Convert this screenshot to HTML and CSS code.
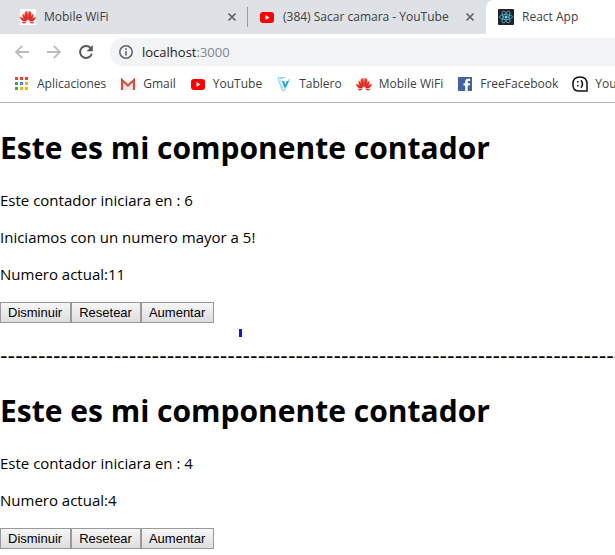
FILE: index.html
```html
<!DOCTYPE html>
<html lang="es">
<head>
<meta charset="utf-8">
<title>React App</title>
<link rel="stylesheet" href="styles.css">
</head>
<body>
<svg class="defs" aria-hidden="true">
  <defs>
    <linearGradient id="red" x1="0" y1="0" x2="0" y2="1">
      <stop offset="0" stop-color="#f0503c"/><stop offset="1" stop-color="#d60808"/>
    </linearGradient>
    <symbol id="flower" viewBox="0 0 16 16">
      <g fill="url(#red)">
        <path d="M7.7 11.4C5 8.500 3.700 5.500 5 3.300 5.700 2.300 6.600 2 7.400 2c.6 2.800.6 6 .3 9.400z"/>
        <path d="M8.300 11.400C11 8.500 12.300 5.500 11 3.300 10.300 2.300 9.400 2 8.600 2c-.6 2.800-.6 6-.3 9.400z"/>
        <path d="M7.200 11.800C3.800 10 1.600 7.500 2.700 4.400 4.800 6 6.500 8.800 7.200 11.800z"/>
        <path d="M8.800 11.800c3.400-1.800 5.600-4.300 4.500-7.400-2.100 1.600-3.800 4.400-4.500 7.400z"/>
        <path d="M6.800 12.300C3.300 12.600.2 11.200.1 7.700c2.900.8 5.300 2.500 6.700 4.600z"/>
        <path d="M9.200 12.300c3.500.3 6.600-1.100 6.700-4.600-2.900.8-5.300 2.500-6.700 4.600z"/>
        <path d="M6.700 12.800H1.600c1.200 2.200 3.600 2.200 5.100 0z"/>
        <path d="M9.300 12.800h5.100c-1.200 2.200-3.600 2.200-5.100 0z"/>
      </g>
    </symbol>
    <symbol id="youtube" viewBox="0 0 16 16">
      <rect x="1" y="3" width="14" height="11" rx="3" fill="#f00"/>
      <path d="M6.500 6v5l4-2.500z" fill="#fff"/>
    </symbol>
    <symbol id="close" viewBox="0 0 16 16">
      <path d="M4.500 4.500l7 7m0-7l-7 7" stroke="#5f6368" stroke-width="1.700" fill="none"/>
    </symbol>
  </defs>
</svg>

<header class="browser">
  <div class="tabs">
    <div class="tab tab-first">
      <svg class="icon boxed"><use href="#flower"/></svg>
      <span class="tab-title">Mobile WiFi</span>
      <button class="tab-close" aria-label="Cerrar"><svg class="icon"><use href="#close"/></svg></button>
    </div>
    <div class="tab tab-second">
      <svg class="icon"><use href="#youtube"/></svg>
      <span class="tab-title">(384) Sacar camara - YouTube</span>
      <button class="tab-close" aria-label="Cerrar"><svg class="icon"><use href="#close"/></svg></button>
    </div>
    <div class="tab tab-active">
      <svg class="icon" viewBox="0 0 16 16">
        <rect width="16" height="16" rx="1" fill="#20232a"/>
        <g fill="none" stroke="#53b5cb" stroke-width=".8">
          <ellipse cx="8" cy="8" rx="6.500" ry="2.600"/>
          <ellipse cx="8" cy="8" rx="6.500" ry="2.600" transform="rotate(60 8 8)"/>
          <ellipse cx="8" cy="8" rx="6.500" ry="2.600" transform="rotate(120 8 8)"/>
        </g>
        <circle cx="8" cy="8" r="1.500" fill="#61dafb"/>
      </svg>
      <span class="tab-title">React App</span>
    </div>
  </div>

  <div class="toolbar">
    <button class="nav" aria-label="Atrás"><svg class="icon" viewBox="0 0 16 16"><path d="M15 8H2m6.200-6.200L2 8l6.200 6.200" fill="none" stroke="#babcbe" stroke-width="1.800"/></svg></button>
    <button class="nav" aria-label="Adelante"><svg class="icon" viewBox="0 0 16 16"><path d="M1 8h13M7.800 1.800L14 8l-6.200 6.200" fill="none" stroke="#babcbe" stroke-width="1.800"/></svg></button>
    <button class="nav" aria-label="Recargar"><svg class="icon" viewBox="0 0 16 16"><path d="M13 4.500A6 6 0 1 0 13.800 9.800" fill="none" stroke="#54585c" stroke-width="2"/><path d="M14.800 1v6.200H8.600z" fill="#54585c"/></svg></button>
    <div class="address">
      <svg class="icon" viewBox="0 0 16 16"><circle cx="8" cy="8" r="6.200" fill="none" stroke="#5f6368" stroke-width="1.500"/><path d="M8 7v4.500M8 4.300v1.600" stroke="#5f6368" stroke-width="1.600"/></svg>
      <span class="url">localhost<span class="port">:3000</span></span>
    </div>
  </div>

  <nav class="bookmarks">
    <a href="#">
      <svg class="icon" viewBox="0 0 16 16">
        <path d="M1 1h3v3H1zM6 1h3v3H6zM11 1h3v3h-3z" fill="#ea4335"/>
        <path d="M1 6h3v3H1zM1 11h3v3H1z" fill="#34a853"/>
        <path d="M6 6h3v3H6z" fill="#4285f4"/>
        <path d="M11 6h3v3h-3zM6 11h3v3H6zM11 11h3v3h-3z" fill="#f5b400"/>
      </svg>Aplicaciones</a>
    <a href="#">
      <svg class="icon" viewBox="0 0 16 16">
        <path d="M1 3h14v11H1z" fill="#eceae8"/>
        <path d="M2 3h12L8 8.500z" fill="#fff"/>
        <path d="M2 14V4l6 5.500L14 4v10" fill="none" stroke="#d54b3d" stroke-width="2.200"/>
      </svg>Gmail</a>
    <a href="#"><svg class="icon"><use href="#youtube"/></svg>YouTube</a>
    <a href="#">
      <svg class="icon" viewBox="0 0 16 16">
        <path d="M2 2l4 12 2 .5L13.500 3" fill="none" stroke="#8fd7f0" stroke-width="1.200"/>
        <path d="M1.500 1.500L11 1 4.500 3z" fill="#74c9ea"/>
        <path d="M4 3.500l3 9" stroke="#b7e5f5" stroke-width="1.200"/>
        <path d="M6 5h2.200l1 3.800L10.800 5H13l-3.300 6.500H8.200z" fill="#16a5dc"/>
      </svg>Tablero</a>
    <a href="#"><svg class="icon"><use href="#flower"/></svg>Mobile WiFi</a>
    <a href="#">
      <svg class="icon" viewBox="0 0 16 16">
        <path d="M1 1h14v14H1z" fill="#4460a0"/>
        <path d="M8.200 15V9.500H6.500V7.200h1.700V5.800c0-2 1-3.100 3.200-3.100h1.700V5h-1.300c-.9 0-1.100.4-1.100 1.100v1.100H13l-.3 2.300h-2V15z" fill="#fff"/>
      </svg>FreeFacebook</a>
    <a href="#">
      <svg class="icon" viewBox="0 0 16 16">
        <path d="M15 15H6C2.500 15 .9 12.500.9 8S3 1 8 1s7 2.500 7 7z" fill="#fff" stroke="#111" stroke-width="1.500"/>
        <path d="M5 5h1.500v1.500H5zM5 9h1.500v1.500H5z" fill="#111"/>
        <path d="M9 4.200q3 3.800 0 7.600" fill="none" stroke="#111" stroke-width="1.500"/>
      </svg>You</a>
  </nav>
</header>

<main>
  <section class="counter">
    <h1>Este es mi componente contador</h1>
    <p>Este contador iniciara en : 6</p>
    <p>Iniciamos con un numero mayor a 5!</p>
    <p>Numero actual:11</p>
    <div class="actions">
      <button>Disminuir</button><button>Resetear</button><button>Aumentar</button>
      <span class="mark"></span>
    </div>
  </section>
  <h3>----------------------------------------------------------------------------------</h3>
  <section class="counter">
    <h1>Este es mi componente contador</h1>
    <p>Este contador iniciara en : 4</p>
    <p>Numero actual:4</p>
    <div class="actions">
      <button>Disminuir</button><button>Resetear</button><button>Aumentar</button>
    </div>
  </section>
</main>
</body>
</html>
```
FILE: styles.css
```css
* {
  box-sizing: border-box;
}

body {
  margin: 0;
  overflow-x: hidden;
  background: #fff;
  color: #000;
  font-family: "Segoe UI", "Open Sans", sans-serif;
  font-size: 15px;
  line-height: 21px;
}

.defs {
  position: absolute;
  width: 0;
  height: 0;
}

.icon {
  display: block;
  flex: none;
  width: 16px;
  height: 16px;
}

.boxed {
  background: #fff;
}

/* Browser bars */
.browser {
  overflow: hidden;
  border-bottom: 1px solid #b4b4b4;
  color: #3c4043;
  font-size: 12px;
  line-height: 16px;
  white-space: nowrap;
}

.browser button {
  padding: 0;
  border: 0;
  background: none;
}

.tabs {
  display: flex;
  height: 34px;
  background: #dee1e6;
}

.tab {
  display: flex;
  flex: none;
  align-items: center;
  gap: 8px;
}

.tab-title {
  flex: 1;
}

.tab-first {
  width: 248px;
  padding: 0 8px 0 20px;
  background: linear-gradient(#989ba0, #989ba0) right center / 1px 20px no-repeat;
}

.tab-second {
  width: 238px;
  padding: 0 8px 0 11px;
}

.tab-active {
  flex: 1 0 auto;
  padding: 0 12px;
  border-radius: 8px 0 0 0;
  background: #fff;
}

.toolbar {
  display: flex;
  align-items: center;
  gap: 16px;
  height: 36px;
  padding-left: 14px;
}

.address {
  display: flex;
  flex: 1;
  align-items: center;
  gap: 8px;
  height: 28px;
  padding-left: 8px;
  border-radius: 14px 0 0 14px;
  background: #f1f3f4;
}

.url {
  color: #202124;
  font-size: 13px;
}

.port {
  color: #80868b;
}

.bookmarks {
  display: flex;
  align-items: center;
  gap: 14px;
  height: 32px;
  padding: 0 0 4px 14px;
}

.bookmarks a {
  display: flex;
  flex: none;
  align-items: center;
  gap: 7px;
  color: inherit;
  text-decoration: none;
}

/* Page */
main {
  padding-top: 3px;
}

h1 {
  margin: 20px 0 21px;
  font-size: 30px;
  font-weight: 700;
  line-height: 43px;
}

p {
  margin: 0 0 16px;
}

h3 {
  overflow: hidden;
  margin: 21px 0 20px;
  font-family: "DejaVu Sans", sans-serif;
  font-size: 21px;
  font-weight: 400;
  line-height: 25px;
  white-space: nowrap;
}

.actions {
  display: flex;
  padding-top: 1px;
}

.actions button {
  height: 21px;
  padding: 0 8px 0 7px;
  border: 1px solid #999;
  background: linear-gradient(#f6f6f6, #dedede);
  color: #000;
  font: 13px/19px "Liberation Sans", Arial, sans-serif;
}

.mark {
  align-self: flex-end;
  width: 3px;
  height: 8px;
  margin: 0 0 -14px 25px;
  background: #1414dc;
}
```
